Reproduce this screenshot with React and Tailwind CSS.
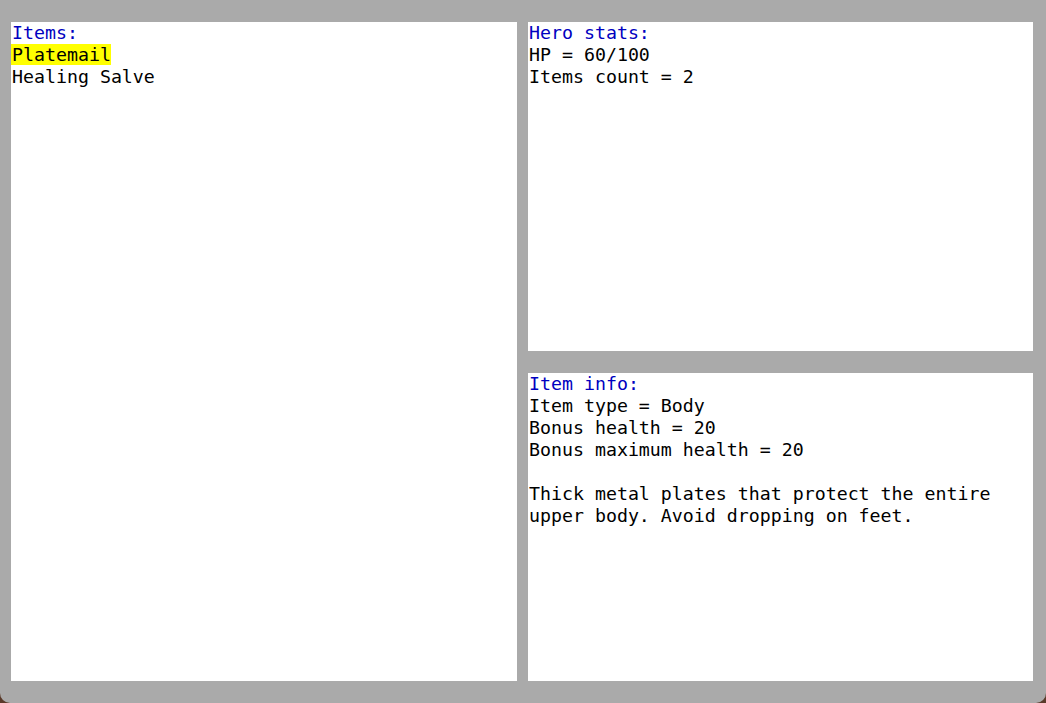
import React from "react";

const mono = { fontFamily: '"DejaVu Sans Mono", "Liberation Mono", monospace' };

function Panel({ title, children, className = "" }) {
  return (
    <div className={`bg-white pl-px text-[18.25px] leading-[22px] text-black ${className}`} style={mono}>
      <div className="text-[#0000c0]">{title}</div>
      {children}
    </div>
  );
}

export default function App() {
  const items = ["Platemail", "Healing Salve"];
  const selected = 0;

  return (
    <div className="w-[1046px] h-[703px] bg-[#5a3a2a] overflow-hidden">
      <div className="w-full h-full bg-[#aaaaaa] rounded-b-[10px] pt-[22px] pb-[22px] pl-[11px] pr-[13px] flex gap-[11px]">
        <Panel title="Items:" className="w-[506px] h-[659px]">
          {items.map((it, i) => (
            <div key={it}>
              <span className={i === selected ? "bg-[#ffff00] -ml-px pl-px" : ""}>{it}</span>
            </div>
          ))}
        </Panel>
        <div className="flex flex-col gap-[22px] w-[505px]">
          <Panel title="Hero stats:" className="h-[329px]">
            <div>HP = 60/100</div>
            <div>Items count = 2</div>
          </Panel>
          <Panel title="Item info:" className="h-[308px]">
            <div>Item type = Body</div>
            <div>Bonus health = 20</div>
            <div>Bonus maximum health = 20</div>
            <div>&nbsp;</div>
            <div>Thick metal plates that protect the entire upper body. Avoid dropping on feet.</div>
          </Panel>
        </div>
      </div>
    </div>
  );
}
